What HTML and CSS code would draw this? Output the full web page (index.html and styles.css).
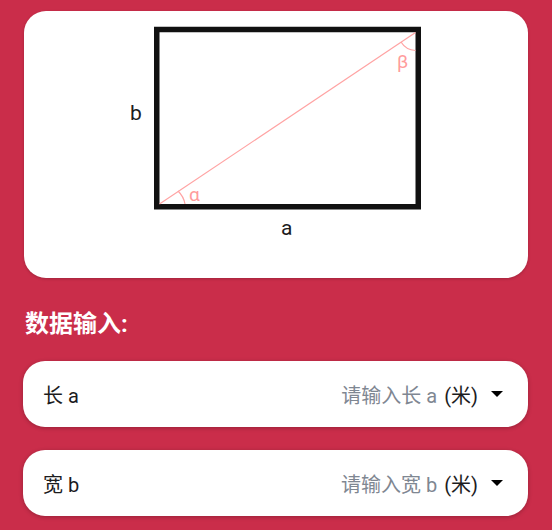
FILE: index.html
```html
<!DOCTYPE html>
<html lang="zh-CN">
<head>
    <meta charset="UTF-8">
    <meta name="viewport" content="width=device-width, initial-scale=1.0">
    <title>数据输入</title>
    <link rel="stylesheet" href="styles.css">
</head>
<body>
    <div class="page">
        <div class="figure-card">
            <svg class="figure" viewBox="0 0 504 267" width="504" height="267">
                <rect class="figure__box" x="132.75" y="18.5" width="261.5" height="177.25" />
                <line class="figure__pink-line" x1="135.5" y1="193" x2="391.5" y2="21.5" />
                <path class="figure__pink-line" d="M154 180 A24 24 0 0 1 161 193" />
                <path class="figure__pink-line" d="M377 31 A18 18 0 0 0 391.5 39.5" />
                <text class="figure__angle" x="165" y="189.5">α</text>
                <text class="figure__angle" x="373" y="57">β</text>
                <text class="figure__label" x="106" y="109">b</text>
                <text class="figure__label" x="257" y="224">a</text>
            </svg>
        </div>

        <h2 class="section-title">数据输入:</h2>

        <div class="input-row">
            <span class="input-row__name">长 a</span>
            <span class="input-row__hint">请输入长 a</span>
            <span class="input-row__unit">(米)</span>
            <span class="input-row__arrow"></span>
        </div>
        <div class="input-row">
            <span class="input-row__name">宽 b</span>
            <span class="input-row__hint">请输入宽 b</span>
            <span class="input-row__unit">(米)</span>
            <span class="input-row__arrow"></span>
        </div>
    </div>
</body>
</html>
```

FILE: styles.css
```css
*, *::before, *::after {
    box-sizing: border-box;
}
body {
    margin: 0;
    padding: 0;
    background: #CA2D4A;
    font-family: Roboto, "Noto Sans CJK SC", sans-serif;
    color: #1c1c1e;
    overflow: hidden;
}
.page {
    height: 530px;
    padding: 11px 24px 0 23px;
}
.figure-card {
    height: 267px;
    margin-left: 1px;
    background: #FFF;
    border-radius: 22px;
    box-shadow: 0 1px 3px rgba(0, 0, 0, 0.2);
}
.figure { display: block; }
.figure__box {
    fill: none;
    stroke: #111;
    stroke-width: 5.5;
}
.figure__pink-line {
    fill: none;
    stroke: #FFA3A3;
    stroke-width: 1.2;
}
.figure__angle { fill: #FF9C9C; font-size: 19px; }
.figure__label { fill: #1c1c1e; font-size: 21px; }
.section-title {
    margin: 30px 0 20px 2px;
    font-size: 24px;
    line-height: 33px;
    font-weight: 700;
    color: #FFF;
}
.input-row {
    display: flex;
    align-items: center;
    height: 66px;
    margin-bottom: 23px;
    padding: 0 25px 0 20px;
    background: #FFF;
    border-radius: 22px;
    box-shadow: 0 1px 4px rgba(0, 0, 0, 0.25);
    font-size: 20px;
}
.input-row__name { flex: 1; }
.input-row__hint { color: #7F8792; margin-right: 7px; }
.input-row__arrow {
    width: 0;
    height: 0;
    margin-left: 13px;
    border-left: 6px solid transparent;
    border-right: 6px solid transparent;
    border-top: 6px solid #000;
}
```
